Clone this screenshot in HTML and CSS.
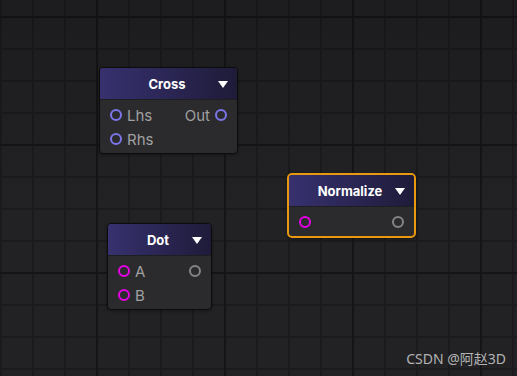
FILE: index.html
```html
<!DOCTYPE html>
<html lang="zh">
<head>
  <meta charset="UTF-8">
  <meta name="viewport" content="width=device-width, initial-scale=1.0">
  <title>Shader Graph</title>
  <link rel="stylesheet" href="styles.css">
</head>
<body>
  <div class="canvas">

    <div class="node node-cross">
      <div class="node-header">
        <span class="node-title">Cross</span>
        <span class="caret"></span>
      </div>
      <div class="node-body">
        <div class="port-row">
          <span class="port-in"><i class="port port-vec"></i>Lhs</span>
          <span class="port-out">Out<i class="port port-vec"></i></span>
        </div>
        <div class="port-row">
          <span class="port-in"><i class="port port-vec"></i>Rhs</span>
        </div>
      </div>
    </div>

    <div class="node node-dot">
      <div class="node-header">
        <span class="node-title">Dot</span>
        <span class="caret"></span>
      </div>
      <div class="node-body">
        <div class="port-row">
          <span class="port-in"><i class="port port-dyn"></i>A</span>
          <span class="port-out"><i class="port port-none"></i></span>
        </div>
        <div class="port-row">
          <span class="port-in"><i class="port port-dyn"></i>B</span>
        </div>
      </div>
    </div>

    <div class="node node-normalize selected">
      <div class="node-header">
        <span class="node-title">Normalize</span>
        <span class="caret"></span>
      </div>
      <div class="node-body">
        <div class="port-row">
          <span class="port-in"><i class="port port-dyn"></i></span>
          <span class="port-out"><i class="port port-none"></i></span>
        </div>
      </div>
    </div>

    <div class="watermark">CSDN @阿赵3D</div>
  </div>
</body>
</html>
```

FILE: styles.css
```css
html, body {
  margin: 0;
  padding: 0;
  height: 100%;
  font-family: 'Inter', 'Noto Sans', sans-serif;
}

.canvas {
  position: relative;
  width: 100%;
  height: 100%;
  overflow: hidden;
  background-color: #222225;
  background-image:
    linear-gradient(rgba(0, 0, 0, 0.16), rgba(0, 0, 0, 0) 60%),
    linear-gradient(#151517 2px, transparent 2px),
    linear-gradient(90deg, #151517 2px, transparent 2px),
    linear-gradient(#1b1b1d 2px, transparent 2px),
    linear-gradient(90deg, #1b1b1d 2px, transparent 2px);
  background-size:
    100% 100%,
    128px 128px,
    128px 128px,
    32px 32px,
    32px 32px;
  background-position:
    0 0,
    0 16px,
    96px 0,
    0 16px,
    0 0;
}

.node {
  position: absolute;
  box-sizing: border-box;
  background: #2b2b2e;
  border: 1px solid #0c0c0d;
  border-radius: 4px;
  overflow: hidden;
  box-shadow: 0 1px 3px rgba(0, 0, 0, 0.35);
}

.node.selected {
  border: 2px solid #e8990f;
  border-radius: 5px;
}

.node-cross {
  left: 99px;
  top: 67px;
  width: 139px;
}

.node-dot {
  left: 107px;
  top: 223px;
  width: 105px;
}

.node-normalize {
  left: 287px;
  top: 173px;
  width: 129px;
}

.node-header {
  position: relative;
  height: 31px;
  display: flex;
  align-items: center;
  justify-content: center;
  padding-right: 3px;
  background: linear-gradient(90deg, #37316f, #1e1b39);
  border-bottom: 1px solid #1e1e21;
}

.node-title {
  color: #fff;
  font-size: 13px;
  font-weight: bold;
}

.caret {
  position: absolute;
  right: 9px;
  top: 13px;
  width: 0;
  height: 0;
  border-left: 5px solid transparent;
  border-right: 5px solid transparent;
  border-top: 7px solid #fff;
}

.node-body {
  padding: 3px 10px 2px 10px;
}

.port-row {
  display: flex;
  justify-content: space-between;
  align-items: center;
  height: 24px;
  color: #a0a0a0;
  font-size: 15px;
}

.port-in, .port-out {
  display: flex;
  align-items: center;
  gap: 5px;
}

.port {
  display: inline-block;
  box-sizing: border-box;
  width: 12px;
  height: 12px;
  border-radius: 50%;
  border: 2.5px solid #7c76ea;
}

.port-dyn {
  border-color: #e600e6;
}

.port-none {
  border-color: #858585;
}

.watermark {
  position: absolute;
  right: 11px;
  bottom: 8px;
  color: #b3b3b3;
  font-size: 14px;
  font-family: 'Noto Sans', 'Noto Sans CJK SC', sans-serif;
}
```
